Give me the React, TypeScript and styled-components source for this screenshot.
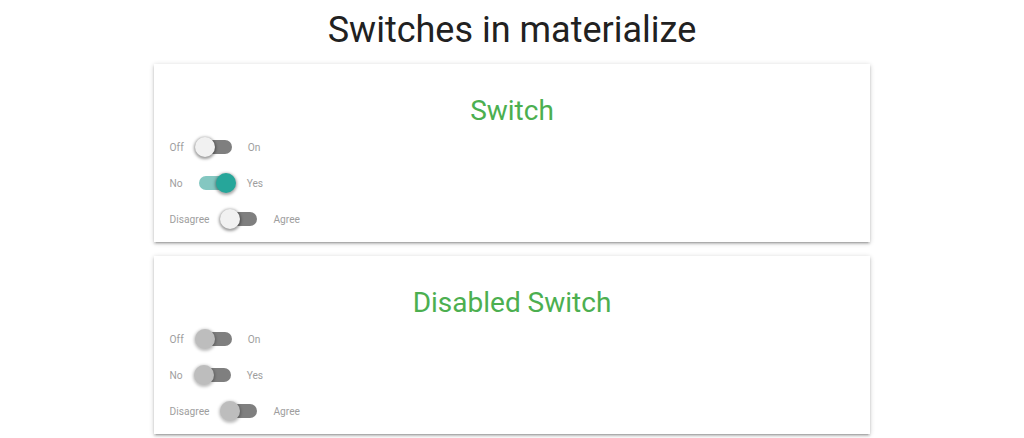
import React from 'react';
import styled, { createGlobalStyle, css } from 'styled-components';

const GlobalStyle = createGlobalStyle`
  html, body {
    margin: 0;
    padding: 0;
    background: #ffffff;
    font-family: Roboto, "Noto Sans", sans-serif;
  }
`;

const Page = styled.div`
  width: 70%;
  margin: 0 auto;
  display: flex;
  flex-direction: column;
  align-items: stretch;
`;

const Heading = styled.h1`
  margin: 8px 0 12px;
  text-align: center;
  font-size: 36px;
  font-weight: 400;
  line-height: 44px;
  color: #212121;
`;

const Card = styled.section`
  background: #fff;
  box-shadow: 0 2px 2px 0 rgba(0, 0, 0, 0.14), 0 3px 1px -2px rgba(0, 0, 0, 0.12),
    0 1px 5px 0 rgba(0, 0, 0, 0.2);
  padding: 29px 16px 5px;
  margin-bottom: 14px;
  display: flex;
  flex-direction: column;
`;

const CardTitle = styled.h2`
  margin: 0;
  text-align: center;
  font-size: 28px;
  font-weight: 400;
  line-height: 36px;
  color: #4caf50;
`;

const Row = styled.label`
  display: flex;
  align-items: center;
  height: 36px;
  font-size: 10.2px;
  color: #9e9e9e;
`;

const Lever = styled.span<{ $on?: boolean; $disabled?: boolean }>`
  position: relative;
  display: inline-block;
  width: 32px;
  height: 14px;
  margin: 0 16px;
  border-radius: 15px;
  background: ${p => (p.$on ? '#84c7c1' : 'rgba(0, 0, 0, 0.5)')};

  &::after {
    content: '';
    position: absolute;
    top: -3px;
    left: ${p => (p.$on ? '17px' : '-5px')};
    width: 20px;
    height: 20px;
    border-radius: 50%;
    ${p =>
      p.$disabled
        ? css`
            background: #bdbdbd;
            box-shadow: 0 1px 3px 1px rgba(0, 0, 0, 0.25);
          `
        : p.$on
        ? css`
            background: #26a69a;
            box-shadow: 0 1px 3px 1px rgba(0, 0, 0, 0.35);
          `
        : css`
            background: #f1f1f1;
            box-shadow: 0 1px 3px 1px rgba(0, 0, 0, 0.4);
          `}
  }
`;

type SwitchItem = { off: string; on: string; checked?: boolean };

const items: SwitchItem[] = [
  { off: 'Off', on: 'On' },
  { off: 'No', on: 'Yes', checked: true },
  { off: 'Disagree', on: 'Agree' },
];

function SwitchCard({ title, disabled }: { title: string; disabled?: boolean }) {
  return (
    <Card>
      <CardTitle>{title}</CardTitle>
      {items.map(it => (
        <Row key={it.off}>
          {it.off}
          <Lever $on={!disabled && it.checked} $disabled={disabled} />
          {it.on}
        </Row>
      ))}
    </Card>
  );
}

export default function App() {
  return (
    <>
      <GlobalStyle />
      <Page>
        <Heading>Switches in materialize</Heading>
        <SwitchCard title="Switch" />
        <SwitchCard title="Disabled Switch" disabled />
      </Page>
    </>
  );
}
